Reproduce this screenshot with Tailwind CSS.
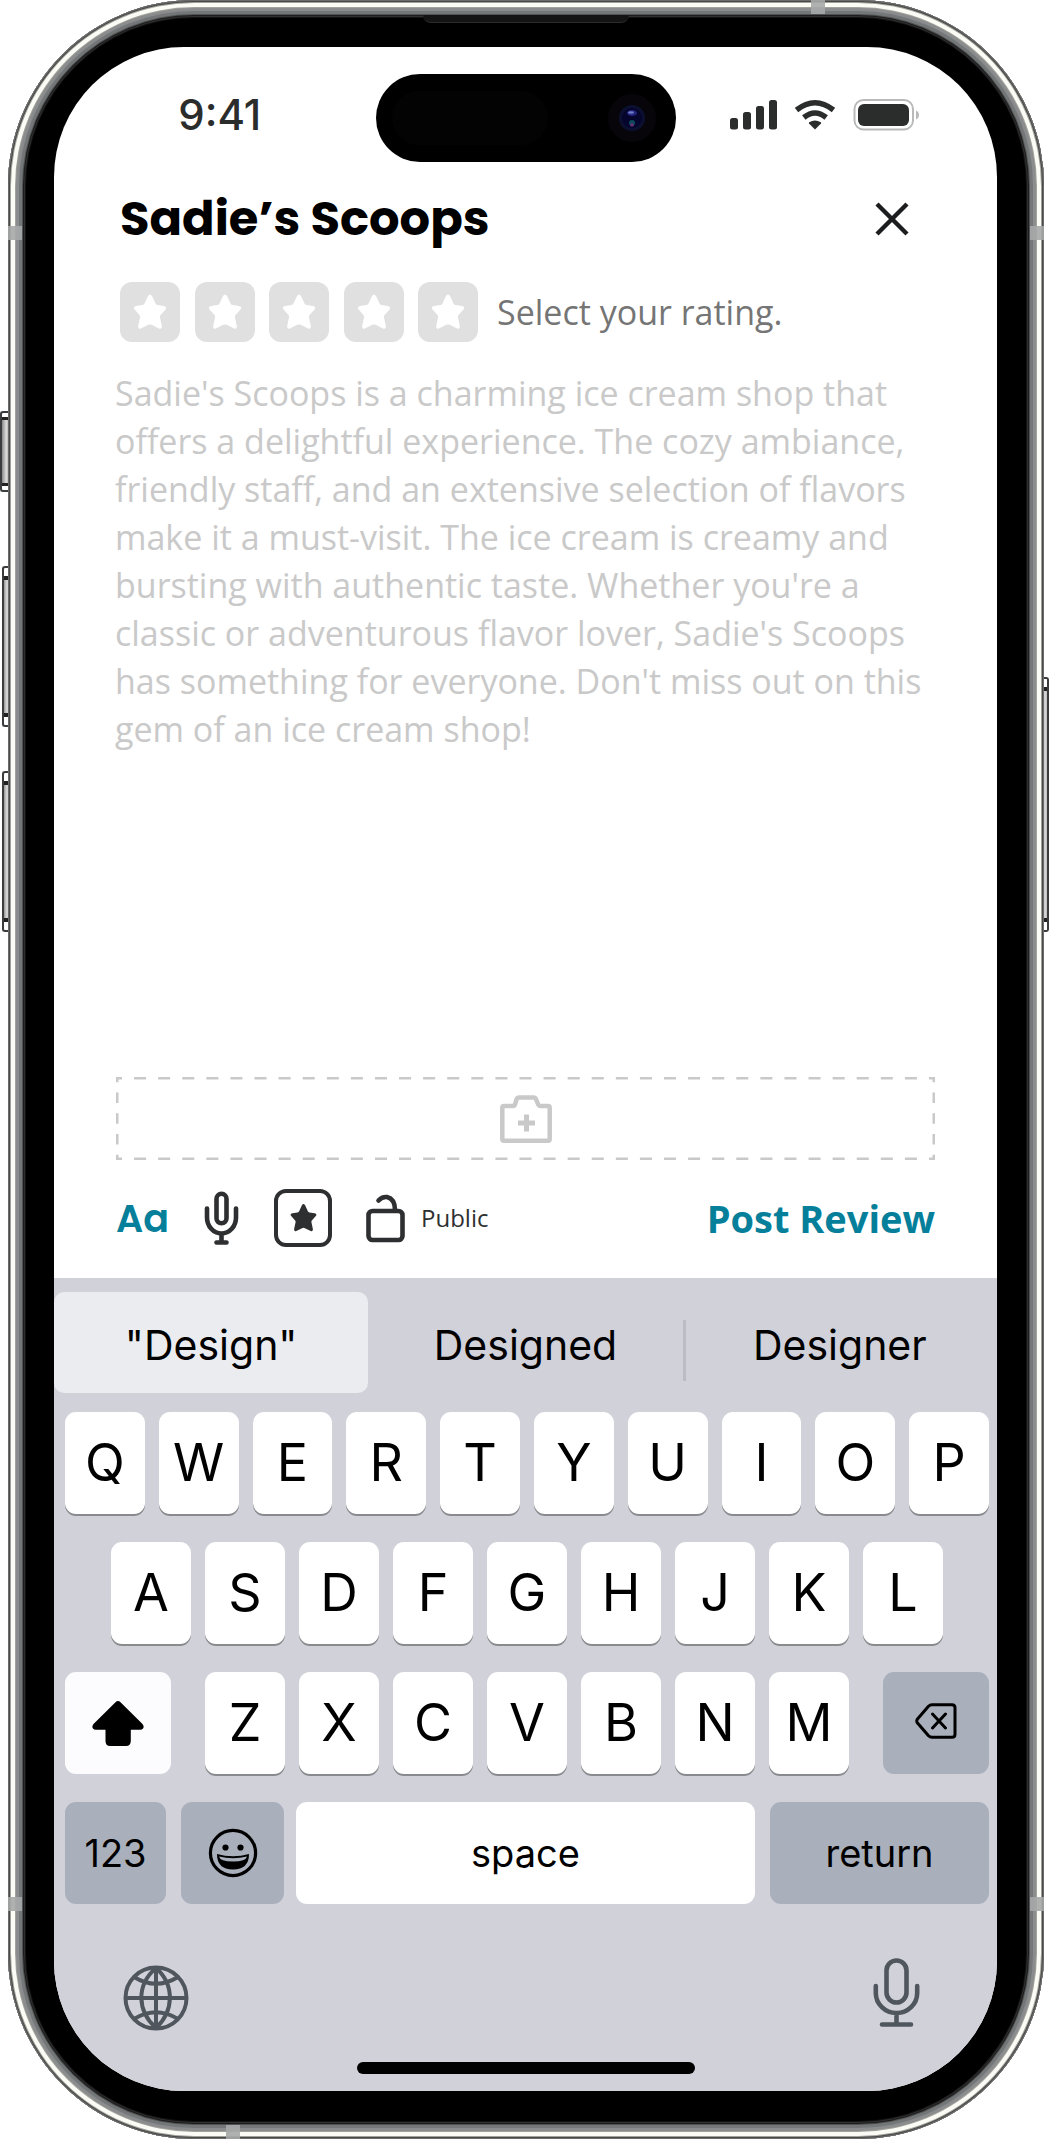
<!DOCTYPE html>
<html lang="en">
<head>
<meta charset="utf-8">
<meta name="viewport" content="width=device-width, initial-scale=1">
<title>Sadie’s Scoops – Write a review</title>
<script src="https://cdn.jsdelivr.net/npm/@tailwindcss/browser@4"></script>
</head>
<body class="bg-white">
<svg class="hidden" aria-hidden="true">
  <symbol id="star" viewBox="0 0 34 36"><path d="M15 2Q17-1 19 2L22.500 9.500Q23 10.800 24.500 11L31 12Q34.500 12.800 32.500 15.500L27.500 21Q26.700 22 27 23.500L28.800 32Q29 35.500 26 34.500L18.800 30.800Q17 30 15.200 30.800L8 34.500Q5 35.500 5.200 32L7 23.500Q7.300 22 6.500 21L1.500 15.500Q-.5 12.800 3 12L9.500 11Q11 10.800 11.500 9.500Z" fill="currentColor"/></symbol>
</svg>

<div class="relative flex min-h-screen px-2">
  <!-- side buttons -->
  <div class="absolute left-0 top-[411px] h-[81px] w-[9px] rounded-l-[3px] border-2 border-r-0 border-[#3a3c3d] bg-white py-1"><div class="h-full border-y-3 border-[#222] bg-[linear-gradient(90deg,#888,#ddd_60%,#aaa)]"></div></div>
  <div class="absolute left-[2px] top-[566px] h-[161px] w-[7px] rounded-l-[3px] border-2 border-r-0 border-[#3a3c3d] bg-white py-2"><div class="h-full border-y-4 border-[#222] bg-[linear-gradient(90deg,#999,#ddd_60%,#aaa)]"></div></div>
  <div class="absolute left-[2px] top-[771px] h-[161px] w-[7px] rounded-l-[3px] border-2 border-r-0 border-[#3a3c3d] bg-white py-2"><div class="h-full border-y-4 border-[#222] bg-[linear-gradient(90deg,#999,#ddd_60%,#aaa)]"></div></div>
  <div class="absolute right-[3px] top-[677px] h-[255px] w-[7px] rounded-r-[3px] border-2 border-l-0 border-[#3a3c3d] bg-white py-2"><div class="h-full border-y-4 border-[#222] bg-[linear-gradient(90deg,#888,#ddd_60%,#bbb)]"></div></div>

  <!-- phone body -->
  <div class="relative flex w-full rounded-[186px] bg-black p-[47px] pb-12 pl-[46px] shadow-[inset_0_0_0_1px_#6a6b6a,inset_0_0_0_2px_#484a4a,inset_0_0_0_3px_#a2a29a,inset_0_0_0_7px_#fcfcf7,inset_0_0_0_8px_#a3a39c,inset_0_0_0_11px_#8a8c8d,inset_0_0_0_14px_#747778,inset_0_0_0_15px_#505253,inset_0_0_0_16px_#1c1c1c,inset_0_0_0_17px_#303030,inset_0_0_0_18px_#121212]">
    <!-- antenna bands -->
    <div class="absolute left-0 top-[226px] h-[14px] w-[14px] bg-[#a6a8a8]/90"></div>
    <div class="absolute right-0 top-[226px] h-[14px] w-[14px] bg-[#a6a8a8]/90"></div>
    <div class="absolute bottom-[228px] left-0 h-[14px] w-[14px] bg-[#a6a8a8]/90"></div>
    <div class="absolute bottom-[228px] right-0 h-[14px] w-[14px] bg-[#a6a8a8]/90"></div>
    <div class="absolute right-[219px] top-0 h-[14px] w-[14px] bg-[#a6a8a8]/90"></div>
    <div class="absolute bottom-0 left-[218px] h-[14px] w-[14px] bg-[#a6a8a8]/90"></div>
    <!-- earpiece -->
    <div class="absolute left-1/2 top-[15px] h-2 w-[206px] -translate-x-1/2 rounded-b-lg border-b border-[#2c2c2c] bg-[#141414]"></div>

    <main class="flex w-full flex-col overflow-hidden rounded-[130px] bg-white font-['Open_Sans',sans-serif]">
      <div class="grid grid-cols-[1fr_300px_1fr] pt-[27px]">
        <div class="flex h-[81px] items-center justify-center pl-[10px] font-['Inter',sans-serif] text-[42px] font-medium text-[#2b2d2d]">9:41</div>
        <div class="flex h-[88px] items-center justify-between rounded-full bg-black pl-4 pr-5">
          <div class="h-[54px] w-[156px] rounded-full bg-[#030303]"></div>
          <svg class="size-12" viewBox="0 0 48 48" aria-hidden="true"><circle cx="24" cy="24" r="24" fill="#07050a"/><circle cx="24" cy="24" r="13" fill="#0c1030"/><circle cx="24" cy="24" r="10" fill="#04042c"/><ellipse cx="24" cy="19" rx="5" ry="3" fill="#24247c"/><ellipse cx="23" cy="18.500" rx="3" ry="1.200" fill="#6f7bc8"/><circle cx="24" cy="29" r="3" fill="#0c4a5c"/><circle cx="24" cy="31" r="1.800" fill="#6a2f78"/></svg>
        </div>
        <div class="flex h-[81px] items-center justify-center pr-[22px] text-[#2b2d2d]">
          <svg class="h-8 w-[190px]" viewBox="0 0 190 32" role="img" aria-label="Signal, Wi-Fi and battery">
            <g fill="currentColor"><rect x="0" y="19" width="8" height="11.500" rx="2.500"/><rect x="13" y="13" width="8" height="17.500" rx="2.500"/><rect x="26" y="7" width="8" height="23.500" rx="2.500"/><rect x="39" y="1" width="8" height="29.500" rx="2.500"/>
            <path d="M85 30.500 79 24.500Q78.500 24 79.200 23.300Q85 19.500 90.800 23.300Q91.500 24 91 24.500Z"/></g>
            <g fill="none" stroke="currentColor" stroke-width="5.500"><path d="M66.500 11Q85-3.500 103.500 11"/><path d="M73.800 18.500Q85 9.500 96.200 18.500"/></g>
            <rect x="124.500" y="1" width="58.500" height="29.500" rx="9" fill="none" stroke="#b9b9b9" stroke-width="2"/><rect x="128" y="5" width="51" height="22" rx="6" fill="currentColor"/><path d="M186 11.500Q189 13 189 16T186 20.500Z" fill="#b9b9b9"/>
          </svg>
        </div>
      </div>

      <div class="mt-[18px] flex h-[78px] items-center justify-between pl-[66px] pr-[83px]">
        <h1 class="font-['Poppins','Inter',sans-serif] text-[48px] font-bold text-black [font-feature-settings:'cv11']">Sadie’s Scoops</h1>
        <button type="button" aria-label="Close" class="p-[5px]"><svg class="size-[34px]" viewBox="0 0 34 34"><path d="M2 2 32 32M32 2 2 32" stroke="#1c1d1f" stroke-width="4.400"/></svg></button>
      </div>

      <div class="mt-6 flex items-center pl-[66px]">
        <fieldset class="flex w-[358px] justify-between text-white" aria-label="Rating">
          <label class="relative flex size-[60px] items-center justify-center rounded-xl bg-[#e0e0e0]"><input type="radio" name="rating" value="1" aria-label="1 star" class="sr-only"><svg class="h-9 w-[34px]"><use href="#star"/></svg></label>
          <label class="relative flex size-[60px] items-center justify-center rounded-xl bg-[#e0e0e0]"><input type="radio" name="rating" value="2" aria-label="2 stars" class="sr-only"><svg class="h-9 w-[34px]"><use href="#star"/></svg></label>
          <label class="relative flex size-[60px] items-center justify-center rounded-xl bg-[#e0e0e0]"><input type="radio" name="rating" value="3" aria-label="3 stars" class="sr-only"><svg class="h-9 w-[34px]"><use href="#star"/></svg></label>
          <label class="relative flex size-[60px] items-center justify-center rounded-xl bg-[#e0e0e0]"><input type="radio" name="rating" value="4" aria-label="4 stars" class="sr-only"><svg class="h-9 w-[34px]"><use href="#star"/></svg></label>
          <label class="relative flex size-[60px] items-center justify-center rounded-xl bg-[#e0e0e0]"><input type="radio" name="rating" value="5" aria-label="5 stars" class="sr-only"><svg class="h-9 w-[34px]"><use href="#star"/></svg></label>
        </fieldset>
        <p class="pl-[19px] text-[34px] leading-[60px] text-[#757575]">Select your rating.</p>
      </div>

      <textarea aria-label="Your review" class="mx-[61px] mt-[27px] min-h-96 grow resize-none text-[34px] leading-12 outline-none placeholder:text-[#c9c9c9]" placeholder="Sadie's Scoops is a charming ice cream shop that offers a delightful experience. The cozy ambiance, friendly staff, and an extensive selection of flavors make it a must-visit. The ice cream is creamy and bursting with authentic taste. Whether you're a classic or adventurous flavor lover, Sadie's Scoops has something for everyone. Don't miss out on this gem of an ice cream shop!"></textarea>

      <button type="button" aria-label="Add photo" class="relative mx-[62px] flex h-[83px] items-center justify-center text-[#c9c9c9]">
        <svg class="absolute inset-0 size-full" stroke="currentColor" stroke-width="5">
          <line x1="0" y1="0" x2="100%" y2="0" pathLength="34" stroke-dasharray=".5 .5" stroke-dashoffset=".25"/><line x1="0" y1="100%" x2="100%" y2="100%" pathLength="34" stroke-dasharray=".5 .5" stroke-dashoffset=".25"/>
          <line x1="0" y1="0" x2="0" y2="100%" pathLength="4" stroke-dasharray=".5 .5" stroke-dashoffset=".25"/><line x1="100%" y1="0" x2="100%" y2="100%" pathLength="4" stroke-dasharray=".5 .5" stroke-dashoffset=".25"/>
        </svg>
        <svg class="h-12 w-[52px]" viewBox="0 0 52 48" fill="none" stroke="currentColor" stroke-width="4.500" stroke-linejoin="round"><path d="M4 11H13Q14.500 11 15 9.500L16.500 4.500Q17.200 2.500 19 2.500H33.500Q35.300 2.500 36 4.200L38 9Q38.800 11 40.500 11H48Q49.700 11 49.700 12.700V44Q49.700 45.700 48 45.700H4Q2.300 45.700 2.300 44V12.700Q2.300 11 4 11Z"/><path d="M18 28H35M26.500 19.500V36.500" stroke-width="5"/></svg>
      </button>

      <div class="flex h-[118px] items-center justify-between pb-[2px] pl-[62px] pr-[62px] text-[#2d2f30]">
        <div class="flex items-center">
          <button type="button" aria-label="Text format" class="w-12 text-left font-['Poppins','Inter',sans-serif] text-[38px] font-semibold text-[#067f9b] [font-feature-settings:'cv11']">Aa</button>
          <button type="button" aria-label="Dictate" class="ml-10"><svg class="h-[54px] w-9" viewBox="0 0 36 54" fill="none" stroke="currentColor" stroke-width="4.600" stroke-linecap="round"><rect x="12.500" y="2.800" width="10" height="29.500" rx="5"/><path d="M3 17.500V26.500A14.500 16 0 0 0 32 26.500V17.500M17.500 43V51M12.500 51.500H22.500"/></svg></button>
          <button type="button" aria-label="Stickers" class="ml-[34px] flex size-[58px] items-center justify-center rounded-xl border-4 border-current"><svg class="h-[30px] w-[27px]"><use href="#star"/></svg></button>
          <button type="button" class="ml-[34px] flex items-center gap-4 text-2xl"><svg class="h-[50px] w-[39px]" viewBox="0 0 39 50" fill="none" stroke="currentColor" stroke-width="4.600" stroke-linecap="round"><rect x="2.500" y="18" width="34" height="29" rx="4"/><path d="M12.500 7.500Q16 3.500 21 4Q29 6 29 17"/></svg>Public</button>
        </div>
        <button type="submit" class="text-[38px] font-bold text-[#067f9b]">Post Review</button>
      </div>

      <!-- on-screen keyboard -->
      <section aria-label="Keyboard" class="flex flex-col bg-[#d1d1da] pt-[14px] font-['Inter',sans-serif] text-black">
        <div class="grid h-[101px] grid-cols-3 text-[41px] leading-[61px] [&>button]:pt-[5px]">
          <button type="button" class="rounded-[10px] bg-[#ebecf0]">"Design"</button>
          <button type="button">Designed</button>
          <button type="button" class="bg-linear-to-b from-[#bcbcc2] to-[#bcbcc2] bg-[length:3px_61px] bg-[position:0_28px] bg-no-repeat">Designer</button>
        </div>
        <div class="mt-[19px] flex flex-col gap-7 pl-[11px] pr-2 text-[52px] [&_button]:flex [&_button]:h-[102px] [&_button]:items-center [&_button]:justify-center [&_button]:rounded-[11px] [&_button]:shadow-[0_2px_0_#898a8d]">
          <div class="grid grid-cols-10 gap-[14px] [&>button]:bg-white">
            <button type="button">Q</button><button type="button">W</button><button type="button">E</button><button type="button">R</button><button type="button">T</button><button type="button">Y</button><button type="button">U</button><button type="button">I</button><button type="button">O</button><button type="button">P</button>
          </div>
          <div class="grid grid-cols-9 gap-[14px] px-[46px] [&>button]:bg-white">
            <button type="button">A</button><button type="button">S</button><button type="button">D</button><button type="button">F</button><button type="button">G</button><button type="button">H</button><button type="button">J</button><button type="button">K</button><button type="button">L</button>
          </div>
          <div class="flex gap-[34px]">
            <button type="button" aria-label="Shift" class="w-[106px] bg-[#fcfcfe] shadow-none!"><svg class="h-[45px] w-[52px]" viewBox="0 0 52 45"><path d="M23.500 1.200Q26-1 28.500 1.200L50.500 23Q52.500 25.500 51 27.500Q50.200 28.800 48 28.800H38.800V40Q38.800 45 34 45H18Q13.500 45 13.500 40V28.800H4Q1.800 28.800 1 27.500Q-.5 25.500 1.500 23Z"/></svg></button>
            <div class="grid grow grid-cols-7 gap-[14px] [&>button]:bg-white">
              <button type="button">Z</button><button type="button">X</button><button type="button">C</button><button type="button">V</button><button type="button">B</button><button type="button">N</button><button type="button">M</button>
            </div>
            <button type="button" aria-label="Delete" class="w-[106px] bg-[#a9afbb] pb-1 shadow-none!"><svg class="h-9 w-[42px]" viewBox="0 0 42 36" fill="none" stroke="#000" stroke-width="3" stroke-linejoin="round" stroke-linecap="round"><path d="M17 1.700H37Q40 1.700 40 4.700V31.300Q40 34.300 37 34.300H17Q15 34.300 13.500 32.800L2.500 20Q1 18 2.500 16L13.500 3.200Q15 1.700 17 1.700ZM17.500 11 30.500 25M30.500 11 17.500 25"/></svg></button>
          </div>
          <div class="flex text-[38px] [&>button]:shadow-none!">
            <button type="button" class="w-[101px] bg-[#a9afbb]">123</button>
            <button type="button" aria-label="Emoji" class="ml-[15px] w-[103px] bg-[#a9afbb]"><svg class="size-[50px]" viewBox="0 0 50 50"><circle cx="25" cy="25" r="22.600" fill="none" stroke="#000" stroke-width="3.200"/><circle cx="17.500" cy="19.500" r="3.100"/><circle cx="32.500" cy="19.500" r="3.100"/><path d="M9 26Q25 30.500 41 26Q41 41.500 25 41.500T9 26Z"/><path d="M11 28.500Q25 32 39 28.500Q38 33.500 25 33.500T11 28.500Z" fill="#a9afbb"/></svg></button>
            <button type="button" class="ml-3 grow bg-white">space</button>
            <button type="button" class="ml-[15px] w-[219px] bg-[#a9afbb]">return</button>
          </div>
        </div>
        <div class="mt-[54px] flex items-end justify-between pl-[69px] pr-[77px] text-[#50565e]">
          <button type="button" aria-label="Next keyboard"><svg class="size-[66px]" viewBox="0 0 66 66" fill="none" stroke="currentColor" stroke-width="4"><circle cx="33" cy="33" r="30.500"/><path d="M33 2V64M2 33H64M33 3C13 20 14 46 33 63M33 3C52 20 51 46 33 63M11 12Q33 25.500 55 12M11 54Q33 40.500 55 54"/></svg></button>
          <button type="button" aria-label="Dictation" class="pb-1"><svg class="h-[69px] w-[47px]" viewBox="0 0 47 69" fill="none" stroke="currentColor" stroke-width="4.600" stroke-linecap="round"><rect x="13.500" y="2.500" width="20" height="42" rx="10"/><path d="M2.800 28V35A20.700 20 0 0 0 44.200 35V28M23.500 56V66M9 66.500H38"/></svg></button>
        </div>
        <div class="mx-auto mb-[17px] mt-[31px] h-3 w-[338px] rounded-full bg-black"></div>
      </section>
    </main>
  </div>
</div>
</body>
</html>
